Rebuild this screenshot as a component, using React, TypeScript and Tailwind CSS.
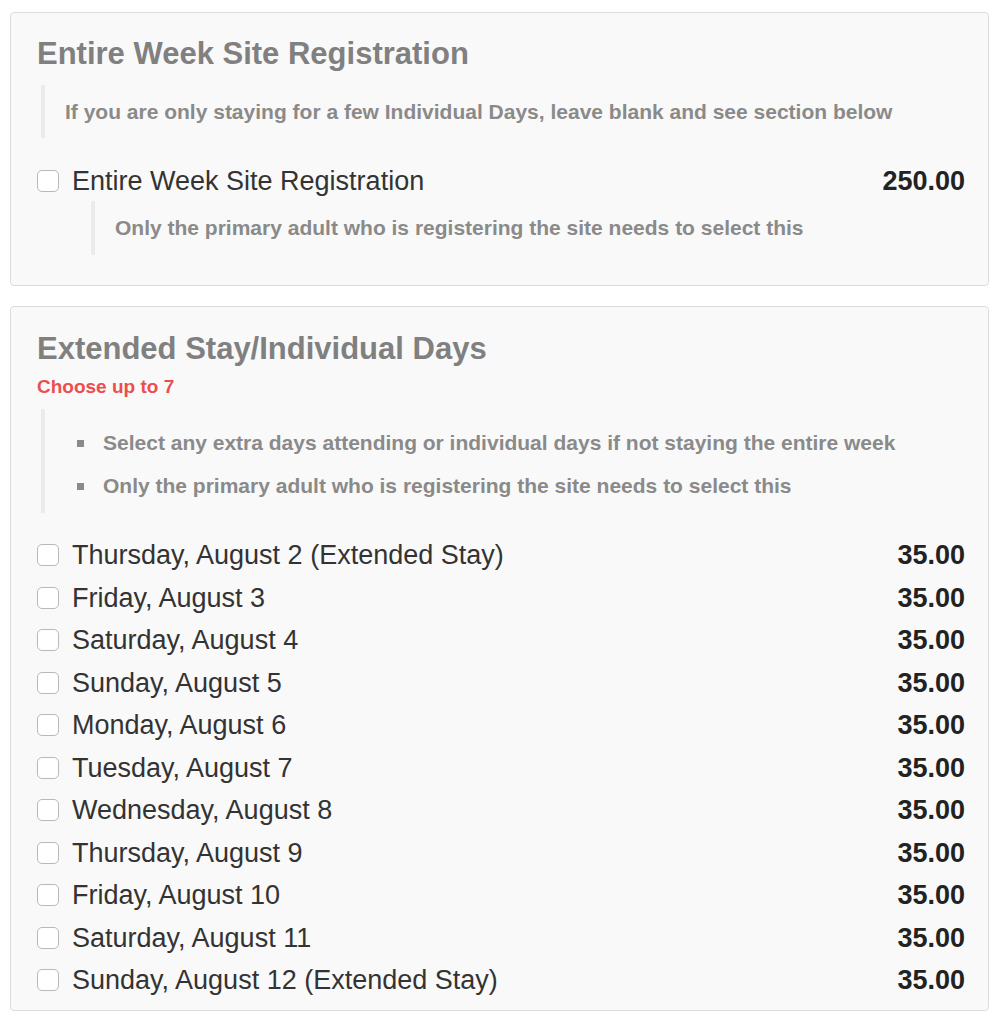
const days = [
  "Thursday, August 2 (Extended Stay)",
  "Friday, August 3",
  "Saturday, August 4",
  "Sunday, August 5",
  "Monday, August 6",
  "Tuesday, August 7",
  "Wednesday, August 8",
  "Thursday, August 9",
  "Friday, August 10",
  "Saturday, August 11",
  "Sunday, August 12 (Extended Stay)",
];

function Checkbox() {
  return (
    <span className="block w-[22px] h-[22px] shrink-0 rounded-[5px] border border-[#b8b8b8] bg-white" />
  );
}

function OptionRow({ label, price, tall }: { label: string; price: string; tall?: boolean }) {
  return (
    <label className={`flex items-center justify-between ${tall ? "h-[36px]" : "h-[42.5px]"}`}>
      <span className="flex items-center gap-[13px]">
        <Checkbox />
        <span className="text-[27px] leading-[32px] text-[#333]">{label}</span>
      </span>
      <span className="text-[27px] leading-[32px] font-bold text-[#222]">{price}</span>
    </label>
  );
}

export default function App() {
  return (
    <div
      className="w-[1001px] min-h-[1024px] bg-white pt-[12px] px-[10px]"
      style={{ fontFamily: '"Liberation Sans", Arial, sans-serif' }}
    >
      {/* Entire week */}
      <section className="w-[979px] rounded-[4px] border border-[#dcdcdc] bg-[#f9f9f9] pl-[26px] pr-[23px] pt-[22px] pb-[30px]">
        <h2 className="text-[31px] leading-[38px] font-bold text-[#808080]">Entire Week Site Registration</h2>
        <blockquote className="mt-[12px] ml-[4px] border-l-[4px] border-[#ebebeb] pl-[20px] h-[53px] flex items-center">
          <p className="text-[21px] font-bold text-[#8a8a8a]">
            If you are only staying for a few Individual Days, leave blank and see section below
          </p>
        </blockquote>
        <div className="mt-[25px]">
          <OptionRow label="Entire Week Site Registration" price="250.00" tall />
        </div>
        <blockquote className="mt-[2px] ml-[54px] border-l-[4px] border-[#ebebeb] pl-[20px] h-[54px] flex items-center">
          <p className="text-[21px] font-bold text-[#8a8a8a]">
            Only the primary adult who is registering the site needs to select this
          </p>
        </blockquote>
      </section>

      {/* Individual days */}
      <section className="mt-[20px] w-[979px] rounded-[4px] border border-[#dcdcdc] bg-[#f9f9f9] pl-[26px] pr-[23px] pt-[23px] pb-[8px]">
        <h2 className="text-[31px] leading-[38px] font-bold text-[#808080]">Extended Stay/Individual Days</h2>
        <p className="mt-[8px] text-[19px] leading-[22px] font-bold text-[#ec4e4e]">Choose up to 7</p>
        <blockquote className="mt-[11px] ml-[4px] border-l-[4px] border-[#ebebeb] h-[104px] pt-[23px]">
          <ul className="pl-[32px] flex flex-col gap-[21px]">
            {[
              "Select any extra days attending or individual days if not staying the entire week",
              "Only the primary adult who is registering the site needs to select this",
            ].map((t) => (
              <li key={t} className="flex items-center gap-[19px] text-[21px] leading-[22px] font-bold text-[#8a8a8a]">
                <span className="block w-[7px] h-[7px] bg-[#8a8a8a]" />
                {t}
              </li>
            ))}
          </ul>
        </blockquote>
        <div className="mt-[21px]">
          {days.map((d) => (
            <OptionRow key={d} label={d} price="35.00" />
          ))}
        </div>
      </section>
    </div>
  );
}
